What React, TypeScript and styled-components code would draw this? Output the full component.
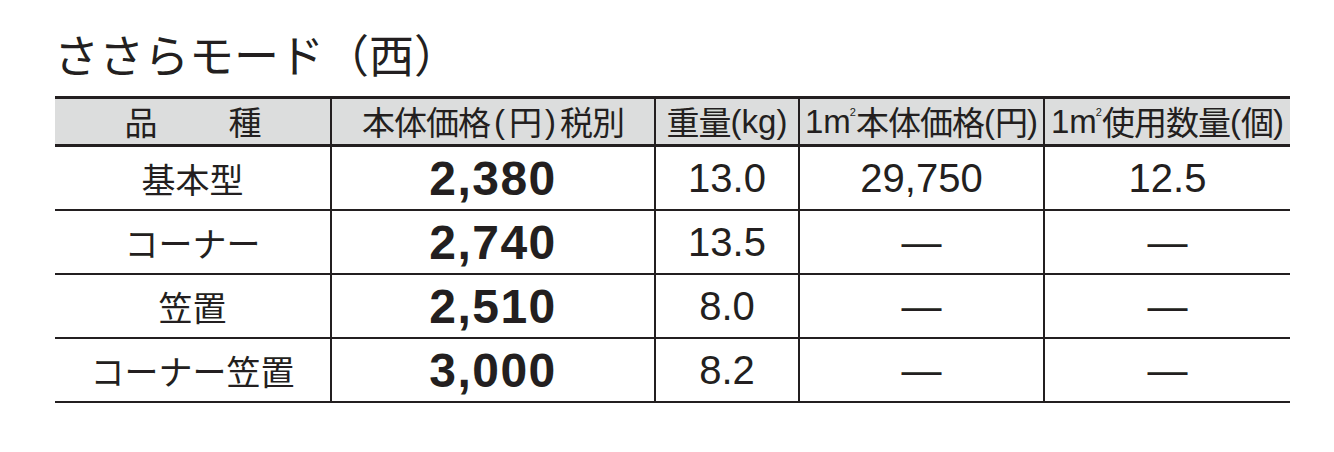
import styled, { createGlobalStyle } from 'styled-components';

const GlobalStyle = createGlobalStyle`
  body {
    margin: 0;
    background: #fff;
    color: #231f20;
    font-family: "Noto Sans CJK JP", "Liberation Sans", sans-serif;
  }
`;

const Page = styled.div`
  padding: 29px 0 0 55px;
  width: 1235px;
`;

const Title = styled.h1`
  margin: 0 0 0 -1px;
  font-size: 45px;
  font-weight: 400;
  line-height: 50px;
  height: 50px;
`;

const Table = styled.div`
  margin-top: 17px;
  display: grid;
  grid-template-columns: 277px 324px 144px 245px 245px;
  border-top: 3px solid #231f20;
`;

const HeadCell = styled.div<{ $last?: boolean }>`
  height: 45px;
  background: #dcdddd;
  border-bottom: 3px solid #231f20;
  border-right: ${p => (p.$last ? 'none' : '2px solid #231f20')};
  display: flex;
  align-items: center;
  justify-content: center;
  font-size: 33px;
  line-height: 1;
  white-space: nowrap;
  letter-spacing: -1px;
`;

const Latin = styled.span`
  font-family: "Liberation Sans Narrow", "Liberation Sans", sans-serif;
  font-size: 33px;
  letter-spacing: 0;
`;

const Paren = styled(Latin)`
  padding: 0 4px;
`;

const Sup = styled.span`
  font-family: "Liberation Sans", sans-serif;
  font-size: 11px;
  align-self: flex-start;
  margin-top: 8px;
  margin-left: -1px;
  margin-right: 1px;
`;

const Cell = styled.div<{ $last?: boolean; $kind?: 'name' | 'price' | 'num' }>`
  height: 62px;
  border-bottom: 2px solid #231f20;
  border-right: ${p => (p.$last ? 'none' : '2px solid #231f20')};
  display: flex;
  align-items: center;
  justify-content: center;
  white-space: nowrap;
  font-family: ${p =>
    p.$kind === 'name'
      ? '"Noto Sans CJK JP", sans-serif'
      : '"Liberation Sans", Arial, sans-serif'};
  font-size: ${p => (p.$kind === 'name' ? '34px' : p.$kind === 'price' ? '48px' : '40px')};
  font-weight: ${p => (p.$kind === 'price' ? 700 : 400)};
  letter-spacing: ${p => (p.$kind === 'price' ? '1.5px' : '0')};
`;

const Spacer = styled.span`
  display: inline-block;
  width: 72px;
`;

type Row = { name: string; price: string; weight: string; perM2: string; qty: string };

const rows: Row[] = [
  { name: '基本型', price: '2,380', weight: '13.0', perM2: '29,750', qty: '12.5' },
  { name: 'コーナー', price: '2,740', weight: '13.5', perM2: '—', qty: '—' },
  { name: '笠置', price: '2,510', weight: '8.0', perM2: '—', qty: '—' },
  { name: 'コーナー笠置', price: '3,000', weight: '8.2', perM2: '—', qty: '—' },
];

export default function App() {
  return (
    <>
      <GlobalStyle />
      <Page>
        <Title>ささらモード（西）</Title>
        <Table>
          <HeadCell>
            品<Spacer />種
          </HeadCell>
          <HeadCell>
            本体価格<Paren>(</Paren>円<Paren>)</Paren>税別
          </HeadCell>
          <HeadCell>
            重量<Latin>(kg)</Latin>
          </HeadCell>
          <HeadCell>
            <Latin>1m</Latin>
            <Sup>2</Sup>本体価格<Latin>(</Latin>円<Latin>)</Latin>
          </HeadCell>
          <HeadCell $last>
            <Latin>1m</Latin>
            <Sup>2</Sup>使用数量<Latin>(</Latin>個<Latin>)</Latin>
          </HeadCell>
          {rows.map(r => (
            <>
              <Cell key={r.name + 'n'} $kind="name">{r.name}</Cell>
              <Cell key={r.name + 'p'} $kind="price">{r.price}</Cell>
              <Cell key={r.name + 'w'} $kind="num">{r.weight}</Cell>
              <Cell key={r.name + 'm'} $kind="num">{r.perM2}</Cell>
              <Cell key={r.name + 'q'} $kind="num" $last>{r.qty}</Cell>
            </>
          ))}
        </Table>
      </Page>
    </>
  );
}
